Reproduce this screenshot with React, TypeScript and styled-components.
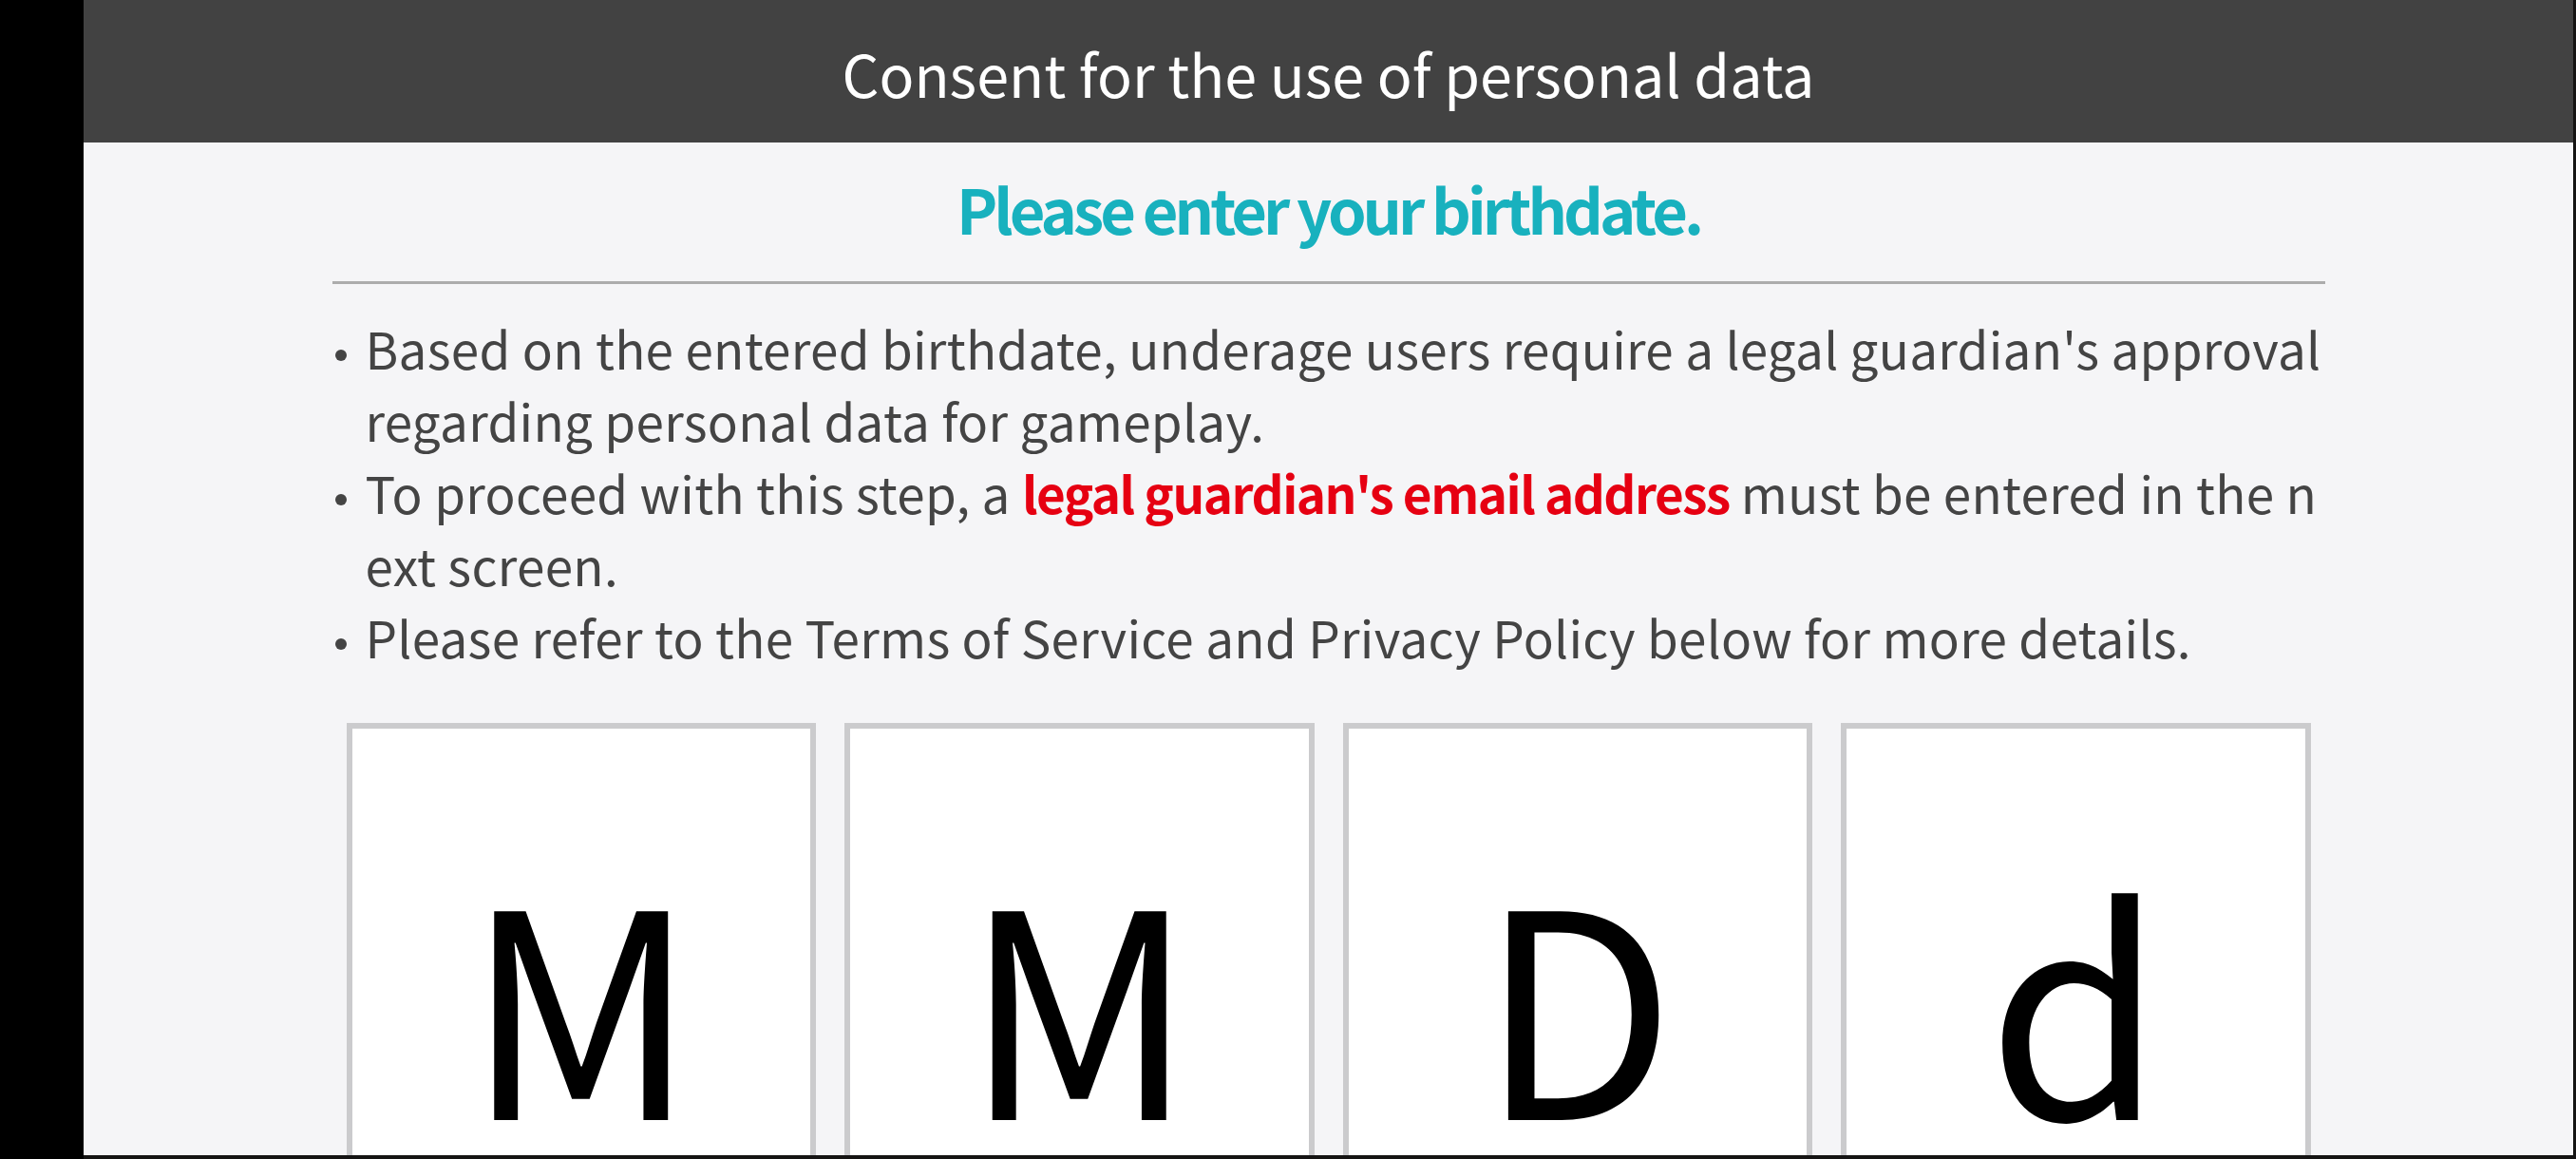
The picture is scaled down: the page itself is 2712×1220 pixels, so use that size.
import styled, { createGlobalStyle } from "styled-components";

const GlobalStyle = createGlobalStyle`
  html, body {
    margin: 0;
    padding: 0;
    background: #000;
    overflow: hidden;
  }
  * {
    box-sizing: border-box;
  }
`;

const fields = ["M", "M", "D", "d"];

export default function App() {
  return (
    <>
      <GlobalStyle />
      <Screen>
        <Frame>
          <Header>Consent for the use of personal data</Header>
          <Content>
            <Title>Please enter your birthdate.</Title>
            <Divider />
            <Notes>
              <Note>
                <Dot />
                <NoteText>
                  Based on the entered birthdate, underage users require a legal
                  guardian's approval regarding personal data for gameplay.
                </NoteText>
              </Note>
              <Note>
                <Dot />
                <NoteText>
                  To proceed with this step, a{" "}
                  <Highlight>legal guardian's email address</Highlight> must be
                  entered in the next screen.
                </NoteText>
              </Note>
              <Note>
                <Dot />
                <NoteText>
                  Please refer to the Terms of Service and Privacy Policy below
                  for more details.
                </NoteText>
              </Note>
            </Notes>
            <DateRow>
              {fields.map((f, i) => (
                <DateBox key={i}>{f}</DateBox>
              ))}
            </DateRow>
          </Content>
        </Frame>
      </Screen>
    </>
  );
}

const Screen = styled.div`
  width: 2712px;
  height: 1220px;
  background: #151413;
  border-left: 88px solid #000;
  display: flex;
  align-items: flex-start;
`;

const Frame = styled.div`
  width: 2621px;
  height: 1216px;
  overflow: hidden;
  background: #f5f5f7;
  display: flex;
  flex-direction: column;
  font-family: "Noto Sans CJK JP", "Noto Sans", sans-serif;
`;

const Header = styled.div`
  height: 150px;
  flex-shrink: 0;
  background: #424242;
  color: #fff;
  font-size: 61px;
  display: flex;
  align-items: center;
  justify-content: center;
  padding-top: 2px;
`;

const Content = styled.div`
  width: 2098px;
  margin: 0 auto;
  display: flex;
  flex-direction: column;
`;

const Title = styled.h2`
  margin: 30px 0 0;
  font-size: 65px;
  line-height: 78px;
  font-weight: 700;
  color: #18b1be;
  text-align: center;
  letter-spacing: -4px;
`;

const Divider = styled.div`
  height: 3px;
  background: #acacac;
  margin-top: 38px;
`;

const Notes = styled.ul`
  list-style: none;
  margin: 29px 0 0;
  padding: 0;
  color: #444;
  font-size: 53px;
  line-height: 76px;
  letter-spacing: 0.28px;
`;

const Note = styled.li`
  display: flex;
`;

const Dot = styled.span`
  width: 35px;
  flex-shrink: 0;
  display: flex;
  padding: 40px 0 0 3px;

  &::before {
    content: "";
    width: 12px;
    height: 12px;
    border-radius: 50%;
    background: #444;
  }
`;

const NoteText = styled.span`
  flex: 1;
  word-break: break-all;
`;

const Highlight = styled.strong`
  color: #e60012;
  font-weight: 700;
  letter-spacing: -1.5px;
`;

const DateRow = styled.div`
  display: grid;
  grid-template-columns: repeat(4, 1fr);
  gap: 30px;
  padding: 0 15px;
  margin-top: 53px;
`;

const DateBox = styled.div`
  height: 600px;
  background: #fff;
  border: 6px solid #cbcbcd;
  color: #000;
  font-size: 300px;
  line-height: 300px;
  text-align: center;
  padding-top: 131px;
`;
